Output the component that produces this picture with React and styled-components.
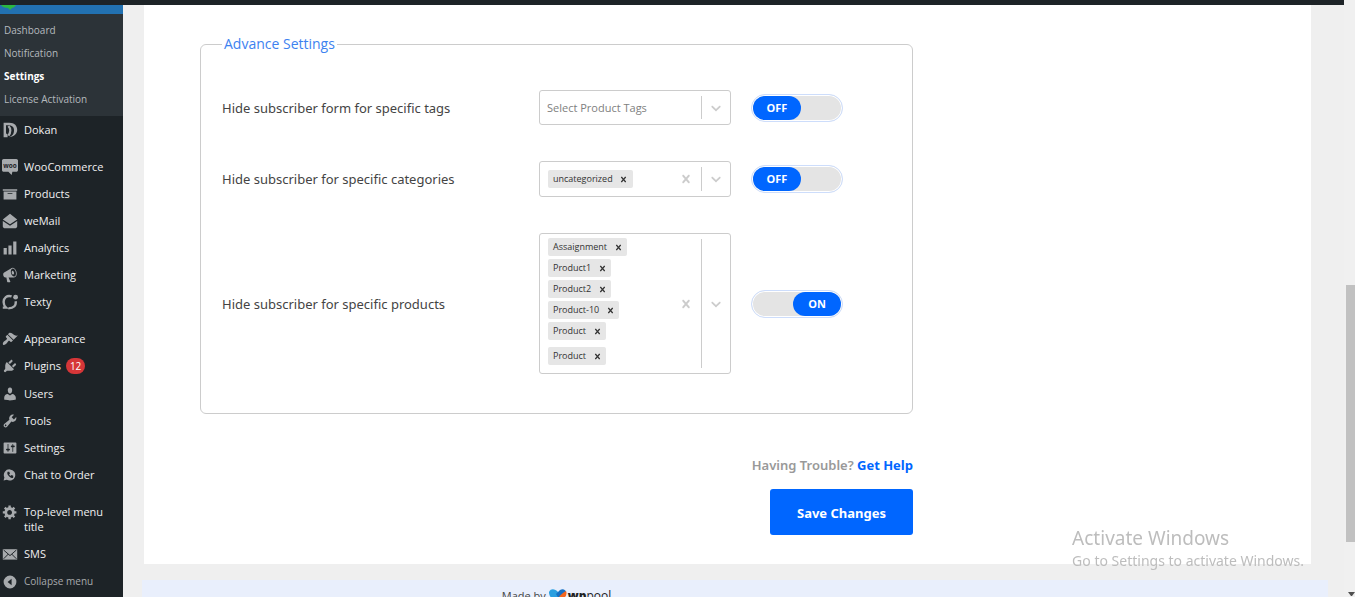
import React, { useState } from "react";
import styled, { createGlobalStyle } from "styled-components";

const wideFont = `"Noto Sans", "Open Sans", sans-serif`;

const GlobalStyle = createGlobalStyle`
  *, *::before, *::after { box-sizing: border-box; }
  body {
    margin: 0;
    background: #efefef;
    font-family: "Open Sans", "Noto Sans", sans-serif;
    color: #3c434a;
  }
  button, input, select { font-family: inherit; }
`;

const Page = styled.div`
  display: grid;
  grid-template-columns: minmax(0, 1fr) 11px;
  height: 100vh;
  overflow: hidden;
`;

const Screen = styled.div`
  display: flex;
  flex-direction: column;
  min-width: 0;
  min-height: 0;
`;

const AdminBar = styled.header`
  flex: none;
  height: 5px;
  background: #1d2327;
`;

const Body = styled.div`
  display: flex;
  flex: 1;
  min-height: 0;
`;

const Sidebar = styled.nav`
  flex: none;
  width: 123px;
  overflow: hidden;
  background: #1d2327;
`;

const CurrentItem = styled.div`
  height: 9px;
  overflow: hidden;
  background: #2271b1;
  svg { display: block; }
`;

const Submenu = styled.ul`
  margin: 0;
  padding: 5px 0;
  list-style: none;
  background: #2c3338;
`;

const SubmenuLink = styled.a`
  display: block;
  padding-left: 4px;
  font-size: 10px;
  line-height: 23px;
  text-decoration: none;
  white-space: nowrap;
  font-weight: ${(p) => (p.$current ? 700 : 400)};
  color: ${(p) => (p.$current ? "#fff" : "#b4b9be")};
`;

const MenuGroup = styled.ul`
  margin: 0 0 10px;
  padding: 0;
  list-style: none;
`;

const MenuLink = styled.a`
  display: flex;
  align-items: flex-start;
  gap: 6px;
  width: 100%;
  padding: 6px 12px 6px 2px;
  font-size: 11px;
  line-height: 15px;
  text-decoration: none;
  color: #f0f0f1;
`;

const CollapseButton = styled.button`
  display: flex;
  align-items: center;
  gap: 6px;
  padding: 7px 0 6px 2px;
  border: 0;
  background: none;
  font-size: 10px;
  line-height: 15px;
  color: #a7aaad;
`;

const MenuIcon = styled.svg`
  flex: none;
  display: block;
  width: 16px;
  height: 16px;
  margin-bottom: -1px;
  color: #a7aaad;
`;

const CountBadge = styled.span`
  margin-left: 5px;
  padding: 1px 4px;
  border-radius: 8px;
  background: #d63638;
  color: #fff;
  font-size: 10px;
`;

const Main = styled.main`
  display: flex;
  flex: 1;
  flex-direction: column;
  min-width: 0;
`;

const Panel = styled.form`
  flex: none;
  margin: 0 33px 16px 21px;
  padding: 30px 56px 29px;
  background: #fff;
`;

const Content = styled.div`
  max-width: 713px;
`;

const Settings = styled.fieldset`
  display: flex;
  flex-direction: column;
  gap: 36px;
  min-width: 0;
  margin: 0;
  padding: 37px 21px 39px;
  border: 1px solid #ccc;
  border-radius: 6px;
`;

const Legend = styled.legend`
  padding: 0 2px;
  font-size: 14px;
  line-height: 18px;
  color: #3d82f0;
`;

const SettingRow = styled.div`
  display: grid;
  grid-template-columns: minmax(0, 297px) minmax(0, 192px) 92px;
  column-gap: 20px;
  align-items: center;
`;

const RowLabel = styled.label`
  font-family: ${wideFont};
  font-size: 13px;
  line-height: 18px;
  color: #444;
`;

const Control = styled.div`
  display: flex;
  align-items: stretch;
  padding: 4px 0;
  border: 1px solid #ccc;
  border-radius: 3px;
  background: #fff;
`;

const Dropdown = styled.select`
  flex: 1;
  min-width: 0;
  height: 25px;
  padding: 0 7px;
  border: 0;
  appearance: none;
  background: transparent;
  font-size: 11px;
  color: #808080;
`;

const Values = styled.div`
  display: flex;
  flex: 1;
  flex-wrap: wrap;
  align-items: center;
  gap: 3px;
  min-width: 0;
  padding: 0 12px 0 8px;
`;

const Chip = styled.span`
  display: flex;
  align-items: center;
  gap: 4px;
  height: 18px;
  padding: 0 2px 0 5px;
  border-radius: 2px;
  background: #e6e6e6;
  font-size: 9px;
  line-height: 18px;
  color: #333;
`;

const IconButton = styled.button`
  display: flex;
  flex: none;
  align-items: center;
  justify-content: center;
  width: ${(p) => p.$width}px;
  padding: 0;
  border: 0;
  background: none;
  color: ${(p) => p.$color};
`;

const SearchInput = styled.input`
  width: 8px;
  height: 26px;
  padding: 0;
  border: 0;
  outline: 0;
  background: transparent;
  font-size: 11px;
`;

const Separator = styled.span`
  flex: none;
  width: 1px;
  margin: 1px 0;
  background: #ccc;
`;

const Arrow = styled.span`
  display: flex;
  flex: none;
  align-items: center;
  justify-content: center;
  width: 28px;
  color: #ccc;
`;

const SwitchTrack = styled.label`
  display: flex;
  justify-content: ${(p) => (p.$on ? "flex-end" : "flex-start")};
  width: 92px;
  height: 28px;
  padding: 1px;
  border: 1px solid #cdddfb;
  border-radius: 14px;
  background: #e4e4e4;
  box-shadow: inset 0 0 0 1px #fff;
`;

const SwitchInput = styled.input`
  width: 0;
  height: 0;
  margin: 0;
  appearance: none;
`;

const SwitchKnob = styled.span`
  width: 48px;
  height: 24px;
  border-radius: 12px;
  background: #06f;
  color: #fff;
  font-size: 11px;
  font-weight: 700;
  line-height: 24px;
  text-align: center;
`;

const Actions = styled.div`
  display: flex;
  flex-direction: column;
  align-items: flex-end;
  gap: 14px;
  margin-top: 41px;
`;

const Help = styled.p`
  margin: 0;
  font-family: ${wideFont};
  font-size: 13px;
  font-weight: 600;
  line-height: 20px;
  color: #999;
`;

const HelpLink = styled.a`
  font-family: "Open Sans", sans-serif;
  font-weight: 700;
  text-decoration: none;
  color: #06f;
`;

const SaveButton = styled.button`
  width: 143px;
  height: 46px;
  padding: 2px 0 0;
  border: 0;
  border-radius: 3px;
  background: #06f;
  color: #fff;
  && { font-family: ${wideFont}; }
  font-size: 13px;
  font-weight: 700;
`;

const Footer = styled.footer`
  flex: 1;
  min-height: 0;
  margin: 0 16px 0 19px;
  padding: 7px 58px 0;
  overflow: hidden;
  background: #e9effc;
`;

const Credit = styled(Content)`
  display: flex;
  justify-content: center;
  gap: 3px;
  font-size: 11px;
  line-height: 18px;
  color: #444;
`;

const Brand = styled.span`
  display: flex;
  align-items: center;
  gap: 1px;
  font-size: 12px;
  color: #222;
  b { font-weight: 800; }
`;

const Watermark = styled.aside`
  position: fixed;
  right: 51px;
  bottom: 26px;
  color: #bdbdbd;
  font-family: ${wideFont};
  font-size: 14px;
  line-height: 20px;
  pointer-events: none;
  white-space: nowrap;
`;

const WatermarkTitle = styled.div`
  font-size: 19px;
  line-height: 26px;
`;

const ScrollTrack = styled.div`
  display: flex;
  flex-direction: column;
  align-items: flex-end;
  justify-content: flex-end;
  background: #f0f0f0;
`;

const ScrollThumb = styled.div`
  width: 9px;
  height: 43%;
  margin-bottom: 50px;
  background: #c1c1c1;
`;

const ScrollArrow = styled.svg`
  display: block;
  width: 7px;
  height: 5px;
`;

const ICONS = {
  dokan: (
    <>
      <path fill="currentColor" d="M2 1h7c7 0 10 4 10 9 0 4-3 8-10 9 5-2 6-5 6-9 0-4-3-6-7-6H5v10l2 2v3H2z" />
      <path fill="none" stroke="currentColor" strokeWidth="3" d="M8 5c3 3 3 8 0 12" />
    </>
  ),
  woo: (
    <>
      <path fill="currentColor" d="M2 0h16c1 0 2 1 2 2v12c0 1-1 2-2 2h-5l-1 4-4-4H2c-1 0-2-1-2-2V2c0-1 1-2 2-2z" />
      <text x="10" y="11" textAnchor="middle" fontSize="8" fontWeight="700" fill="#1d2327">woo</text>
    </>
  ),
  products: <path fill="currentColor" d="M19 4v2H1V4h18zM2 7h16v10H2V7zm11 3V9H7v1h6z" />,
  mail: <path fill="currentColor" d="M10 1l9 7-9 6-9-6zM1 10l9 6 9-6v7c0 1-1 2-2 2H3c-1 0-2-1-2-2z" />,
  analytics: <path fill="currentColor" d="M18 18V2h-4v16h4zm-6 0V7H8v11h4zm-6 0v-8H2v8h4z" />,
  marketing: (
    <path fill="currentColor" d="M18.15 5.94c.46 1.62.38 3.22-.02 4.48-.42 1.28-1.26 2.18-2.3 2.48-.16.06-.26.06-.4.06-.06.02-.12.02-.18.02-.06.02-.14.02-.22.02h-6.8l2.22 5.5c.02.14-.06.26-.14.34-.08.1-.24.16-.34.16H6.95c-.1 0-.26-.06-.34-.16-.08-.08-.16-.2-.14-.34l-1-5.5H4.25l-.02-.02c-.5.06-1.08-.18-1.54-.62s-.88-1.08-1.06-1.88c-.24-.8-.2-1.56-.02-2.2.18-.62.58-1.08 1.06-1.3l.02-.02 9-5.4c.1-.06.18-.1.24-.16.06-.04.14-.08.24-.12.16-.08.28-.12.5-.18 1.04-.3 2.24.1 3.22.98s1.84 2.24 2.26 3.86zm-2.58 5.98h-.02c.4-.1.74-.34 1.04-.7.58-.7.86-1.76.86-3.04 0-.64-.1-1.3-.28-1.98-.34-1.36-1.02-2.5-1.78-3.24s-1.68-1.1-2.46-.88c-.82.22-1.4.96-1.7 2-.32 1.04-.28 2.36.06 3.72.38 1.36 1 2.5 1.8 3.24.78.74 1.62 1.1 2.48.88zm-2.54-7.08c.22-.04.42-.02.62.04.38.16.76.48 1.02 1s.42 1.2.42 1.78c0 .3-.04.56-.12.8-.18.48-.44.84-.86.94-.34.1-.8-.06-1.14-.4s-.64-.86-.78-1.5c-.18-.62-.12-1.24.02-1.72s.48-.84.82-.94z" />
  ),
  texty: (
    <>
      <path fill="none" stroke="currentColor" strokeWidth="3" d="M12 3C6 1 2 5 2 10c0 3 1 5 3 7H1M17 9c1 5-2 9-9 9" />
      <circle cx="17" cy="4" r="3" fill="currentColor" />
    </>
  ),
  appearance: (
    <path fill="currentColor" d="M14.48 11.06L7.41 3.99l1.5-1.5c.5-.56 2.3-.47 3.51.32 1.21.8 1.43 1.28 2.91 2.1 1.18.64 2.45 1.26 4.45.85zm-.71.71L6.7 4.7 4.93 6.47c-.39.39-.39 1.02 0 1.41l1.06 1.06c.39.39.39 1.03 0 1.42-.6.6-1.43 1.11-2.21 1.69-.35.26-.7.53-1.01.84C1.43 14.23.4 16.08 1.4 17.07c.99 1 2.84-.03 4.18-1.36.31-.31.58-.66.85-1.02.57-.78 1.08-1.61 1.69-2.21.39-.39 1.02-.39 1.41 0l1.06 1.06c.39.39 1.02.39 1.41 0z" />
  ),
  plugins: (
    <path fill="currentColor" d="M13.11 4.36L9.87 7.6 8 5.73l3.24-3.24c.35-.34 1.05-.2 1.56.32.52.51.66 1.21.31 1.55zm-8 1.77l.91-1.12 9.01 9.01-1.19.84c-.71.71-2.63 1.16-3.82 1.16H6.14L4.9 17.26c-.59.59-1.54.59-2.12 0-.59-.58-.59-1.53 0-2.12l1.24-1.24v-3.88c0-1.13.4-3.19 1.09-3.89zm7.26 3.97l3.24-3.24c.34-.35 1.04-.21 1.55.31.52.51.66 1.21.31 1.55l-3.24 3.25z" />
  ),
  users: (
    <path fill="currentColor" d="M10 9.25c-2.27 0-2.73-3.44-2.73-3.44C7 4.02 7.82 2 9.97 2c2.16 0 2.98 2.02 2.71 3.81 0 0-.41 3.44-2.68 3.44zm0 2.57L12.72 10c2.39 0 4.52 2.33 4.52 4.53v2.49s-3.65 1.13-7.24 1.13c-3.65 0-7.24-1.13-7.24-1.13v-2.49c0-2.25 1.94-4.48 4.47-4.48z" />
  ),
  tools: (
    <path fill="currentColor" d="M16.68 9.77c-1.34 1.34-3.3 1.67-4.95.99l-5.41 6.52c-.99.99-2.59.99-3.58 0s-.99-2.59 0-3.57l6.52-5.42c-.68-1.65-.35-3.61.99-4.95 1.28-1.28 3.12-1.62 4.72-1.06l-2.89 2.89 2.82 2.82 2.86-2.87c.53 1.58.18 3.39-1.08 4.65zM3.81 16.21c.4.39 1.04.39 1.43 0 .4-.4.4-1.04 0-1.43-.39-.4-1.03-.4-1.43 0-.39.39-.39 1.03 0 1.43z" />
  ),
  settings: (
    <path fill="currentColor" d="M18 16V4c0-.55-.45-1-1-1H3c-.55 0-1 .45-1 1v12c0 .55.45 1 1 1h14c.55 0 1-.45 1-1zM8 11h1c.55 0 1 .45 1 1s-.45 1-1 1H8v1.5c0 .28-.22.5-.5.5s-.5-.22-.5-.5V13H6c-.55 0-1-.45-1-1s.45-1 1-1h1V5.5c0-.28.22-.5.5-.5s.5.22.5.5V11zm5-2h-1c-.55 0-1-.45-1-1s.45-1 1-1h1V5.5c0-.28.22-.5.5-.5s.5.22.5.5V7h1c.55 0 1 .45 1 1s-.45 1-1 1h-1v5.5c0 .28-.22.5-.5.5s-.5-.22-.5-.5V9z" />
  ),
  chat: (
    <>
      <path fill="currentColor" d="M10 3a7 7 0 1 1-4 13l-4 1 1-4a7 7 0 0 1 7-10z" />
      <path fill="#1d2327" d="M7 6l2 0 1 2-1 1c0 1 1 2 2 2l1-1 2 1v2c-1 1-3 1-5-1S6 8 7 6z" />
    </>
  ),
  gear: (
    <path fill="currentColor" d="M18 12h-2.18c-.17.7-.44 1.35-.81 1.93l1.54 1.54-2.1 2.1-1.54-1.54c-.58.36-1.23.63-1.91.79V19H8v-2.18c-.68-.16-1.33-.43-1.91-.79l-1.54 1.54-2.12-2.12 1.54-1.54c-.36-.58-.63-1.23-.79-1.91H1V9.03h2.17c.16-.7.44-1.35.8-1.94L2.43 5.55l2.1-2.1 1.54 1.54c.58-.37 1.24-.64 1.93-.81V2h3v2.18c.68.16 1.33.43 1.91.79l1.54-1.54 2.12 2.12-1.54 1.54c.36.59.64 1.24.8 1.94H18V12zm-8.5 1.5c1.66 0 3-1.34 3-3s-1.34-3-3-3-3 1.34-3 3 1.34 3 3 3z" />
  ),
  sms: (
    <>
      <path fill="currentColor" d="M1 4h18v13H1z" />
      <path fill="none" stroke="#1d2327" strokeWidth="1.2" d="M2 5l8 7 8-7M2 16l6-6M18 16l-6-6" />
    </>
  ),
  collapse: (
    <path fill="currentColor" fillRule="evenodd" d="M10 2a8 8 0 1 1 0 16 8 8 0 0 1 0-16zm2 4l-5 4 5 4z" />
  ),
};

const Icon = ({ name }) => (
  <MenuIcon viewBox="0 0 20 20" aria-hidden="true">{ICONS[name]}</MenuIcon>
);

const Cross = ({ size }) => (
  <svg width={size} height={size} viewBox="0 0 20 20" fill="currentColor" aria-hidden="true">
    <path d="M14.348 14.849c-.469.469-1.229.469-1.697 0L10 11.819l-2.651 3.029c-.469.469-1.229.469-1.697 0s-.469-1.229 0-1.697l2.758-3.15-2.759-3.152c-.469-.469-.469-1.228 0-1.697s1.228-.469 1.697 0L10 8.183l2.651-3.031c.469-.469 1.228-.469 1.697 0s.469 1.229 0 1.697l-2.758 3.152 2.758 3.15c.469.469.469 1.229 0 1.698z" />
  </svg>
);

const Chevron = () => (
  <svg width="16" height="16" viewBox="0 0 20 20" fill="currentColor" aria-hidden="true">
    <path d="M4.516 7.548c.436-.446 1.043-.481 1.576 0L10 11.295l3.908-3.747c.533-.481 1.141-.446 1.574 0 .436.445.408 1.197 0 1.615-.406.418-4.695 4.502-4.695 4.502-.217.223-.502.335-.787.335s-.57-.112-.789-.335c0 0-4.287-4.084-4.695-4.502s-.436-1.17 0-1.615z" />
  </svg>
);

const submenu = ["Dashboard", "Notification", "Settings", "License Activation"];

const menuGroups = [
  [["dokan", "Dokan"]],
  [
    ["woo", "WooCommerce"],
    ["products", "Products"],
    ["mail", "weMail"],
    ["analytics", "Analytics"],
    ["marketing", "Marketing"],
    ["texty", "Texty"],
  ],
  [
    ["appearance", "Appearance"],
    ["plugins", "Plugins", 12],
    ["users", "Users"],
    ["tools", "Tools"],
    ["settings", "Settings"],
    ["chat", "Chat to Order"],
  ],
];

const lastItems = [
  ["gear", "Top-level menu title"],
  ["sms", "SMS"],
];

const MenuItems = ({ items }) =>
  items.map(([icon, text, count]) => (
    <li key={text}>
      <MenuLink href="#">
        <Icon name={icon} />
        <span>
          {text}
          {count && <CountBadge>{count}</CountBadge>}
        </span>
      </MenuLink>
    </li>
  ));

function Switch({ label, initial }) {
  const [on, setOn] = useState(initial);
  return (
    <SwitchTrack $on={on}>
      <SwitchInput
        type="checkbox"
        role="switch"
        aria-label={label}
        checked={on}
        onChange={(e) => setOn(e.target.checked)}
      />
      <SwitchKnob>{on ? "ON" : "OFF"}</SwitchKnob>
    </SwitchTrack>
  );
}

function MultiSelect({ id, initial }) {
  const [values, setValues] = useState(initial);
  const remove = (index) => setValues(values.filter((_, i) => i !== index));
  const chip = (value, index) => (
    <Chip key={index}>
      {value}
      <IconButton type="button" $width={14} $color="#333" aria-label={`Remove ${value}`} onClick={() => remove(index)}>
        <Cross size={11} />
      </IconButton>
    </Chip>
  );
  return (
    <Control>
      <Values>
        {values.map(chip)}
        <SearchInput id={id} type="text" role="combobox" aria-expanded="false" />
      </Values>
      <IconButton type="button" $width={31} $color="#ccc" aria-label="Clear all" onClick={() => setValues([])}>
        <Cross size={16} />
      </IconButton>
      <Separator />
      <Arrow><Chevron /></Arrow>
    </Control>
  );
}

export default function App() {
  return (
    <>
      <GlobalStyle />
      <Page>
        <Screen>
          <AdminBar />
          <Body>
            <Sidebar>
              <CurrentItem>
                <svg width="20" height="9" viewBox="0 0 20 9" aria-hidden="true">
                  <path fill="#2bb741" d="M1 0h15c-1 2-3 3-4 3l-2 2-2-2C5 3 2 2 1 0z" />
                </svg>
              </CurrentItem>
              <Submenu>
                {submenu.map((text) => (
                  <li key={text}>
                    <SubmenuLink href="#" $current={text === "Settings"}>{text}</SubmenuLink>
                  </li>
                ))}
              </Submenu>
              {menuGroups.map((items) => (
                <MenuGroup key={items[0][1]}>
                  <MenuItems items={items} />
                </MenuGroup>
              ))}
              <MenuGroup>
                <MenuItems items={lastItems} />
                <li>
                  <CollapseButton type="button">
                    <Icon name="collapse" />
                    Collapse menu
                  </CollapseButton>
                </li>
              </MenuGroup>
            </Sidebar>
            <Main>
              <Panel onSubmit={(e) => e.preventDefault()}>
                <Content>
                  <Settings>
                    <Legend>Advance Settings</Legend>
                    <SettingRow>
                      <RowLabel htmlFor="tags">Hide subscriber form for specific tags</RowLabel>
                      <Control>
                        <Dropdown id="tags" defaultValue="">
                          <option value="">Select Product Tags</option>
                        </Dropdown>
                        <Separator />
                        <Arrow><Chevron /></Arrow>
                      </Control>
                      <Switch label="Hide by tags" initial={false} />
                    </SettingRow>
                    <SettingRow>
                      <RowLabel htmlFor="categories">Hide subscriber for specific categories</RowLabel>
                      <MultiSelect id="categories" initial={["uncategorized"]} />
                      <Switch label="Hide by categories" initial={false} />
                    </SettingRow>
                    <SettingRow>
                      <RowLabel htmlFor="products">Hide subscriber for specific products</RowLabel>
                      <MultiSelect
                        id="products"
                        initial={["Assaignment", "Product1", "Product2", "Product-10", "Product", "Product"]}
                      />
                      <Switch label="Hide by products" initial={true} />
                    </SettingRow>
                  </Settings>
                  <Actions>
                    <Help>
                      Having Trouble? <HelpLink href="#">Get Help</HelpLink>
                    </Help>
                    <SaveButton type="submit">Save Changes</SaveButton>
                  </Actions>
                </Content>
              </Panel>
              <Footer>
                <Credit>
                  <span>Made by</span>
                  <Brand>
                    <svg width="18" height="14" viewBox="0 0 18 14" aria-hidden="true">
                      <path fill="#2a9fe0" d="M0 3c2-4 6-3 9 0l3 4-4 6C4 11 0 8 0 3z" />
                      <path fill="#1670c4" d="M7 5l4-4c3-2 6 0 6 2l-7 7z" />
                      <path fill="#f4661e" d="M17 2c2 4-2 9-9 12 0-5 4-9 9-12z" />
                    </svg>
                    <span><b>wp</b>pool</span>
                  </Brand>
                </Credit>
              </Footer>
            </Main>
          </Body>
        </Screen>
        <ScrollTrack aria-hidden="true">
          <ScrollThumb />
          <ScrollArrow viewBox="0 0 7 5">
            <path fill="#505050" d="M0 0h7L4 4H3z" />
          </ScrollArrow>
        </ScrollTrack>
      </Page>
      <Watermark>
        <WatermarkTitle>Activate Windows</WatermarkTitle>
        Go to Settings to activate Windows.
      </Watermark>
    </>
  );
}
